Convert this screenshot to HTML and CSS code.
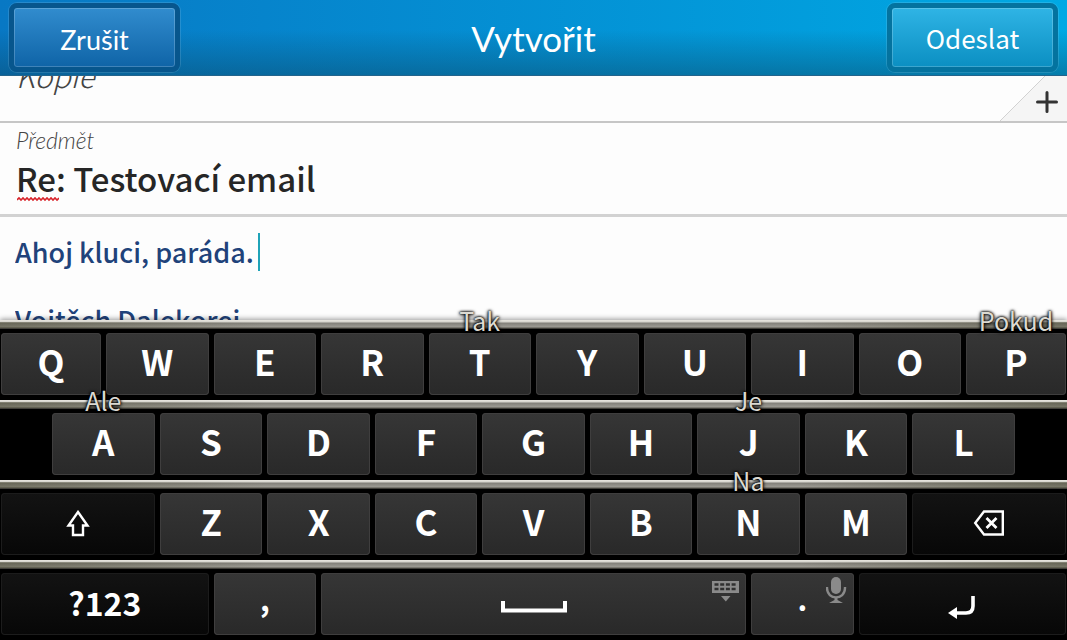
FILE: index.html
```html
<!DOCTYPE html>
<html lang="cs">
<head>
    <meta charset="utf-8">
    <title>Vytvořit</title>
    <link rel="stylesheet" href="styles.css">
</head>
<body>
    <header class="title-bar">
        <button type="button" class="action cancel">Zrušit</button>
        <h1>Vytvořit</h1>
        <button type="button" class="action send">Odeslat</button>
    </header>

    <form class="compose" action="#">
        <div class="cc-row">
            <input type="text" class="cc" name="cc" placeholder="Kopie" aria-label="Kopie">
            <button type="button" class="add" aria-label="Přidat">
                <svg width="67" height="46" viewBox="0 0 67 46">
                    <path d="M0 46L46 0H67V46Z" fill="#f5f5f5"/>
                    <path d="M0 46L46 0" stroke="#d2d2d2" fill="none"/>
                    <path d="M37.500 27H56.500M47 17.500V36.500" stroke="#333" stroke-width="3" stroke-linecap="round"/>
                </svg>
            </button>
        </div>
        <div class="subject-row">
            <label for="subject">Předmět</label>
            <input type="text" id="subject" name="subject" value="Re: Testovací email">
            <svg class="squiggle" width="42" height="6" viewBox="0 0 42 6">
                <path d="M0 4L2 2L4 4L6 2L8 4L10 2L12 4L14 2L16 4L18 2L20 4L22 2L24 4L26 2L28 4L30 2L32 4L34 2L36 4L38 2L40 4L42 2" stroke="#d8232a" stroke-width="1.6" fill="none"/>
            </svg>
        </div>
        <div class="message-row">
            <textarea name="message" rows="3" aria-label="Zpráva">Ahoj kluci, paráda.

Vojtěch Dalekorej</textarea>
            <span class="caret"></span>
        </div>
    </form>

    <div class="keyboard">
        <div class="row">
            <button type="button" class="key edge">Q</button>
            <button type="button" class="key">W</button>
            <button type="button" class="key">E</button>
            <button type="button" class="key">R</button>
            <button type="button" class="key">T<span class="hint">Tak</span></button>
            <button type="button" class="key">Y</button>
            <button type="button" class="key">U</button>
            <button type="button" class="key">I</button>
            <button type="button" class="key">O</button>
            <button type="button" class="key edge">P<span class="hint">Pokud</span></button>
        </div>
        <div class="row middle">
            <button type="button" class="key">A<span class="hint">Ale</span></button>
            <button type="button" class="key">S</button>
            <button type="button" class="key">D</button>
            <button type="button" class="key">F</button>
            <button type="button" class="key">G</button>
            <button type="button" class="key">H</button>
            <button type="button" class="key">J<span class="hint">Je</span></button>
            <button type="button" class="key">K</button>
            <button type="button" class="key">L</button>
        </div>
        <div class="row">
            <button type="button" class="key dark wide" aria-label="Shift">
                <svg width="24" height="28" viewBox="0 0 24 28">
                    <path d="M12 2L21.500 15.500H17V25H7V15.500H2.500Z" fill="none" stroke="#fff" stroke-width="2.400"/>
                </svg>
            </button>
            <button type="button" class="key">Z</button>
            <button type="button" class="key">X</button>
            <button type="button" class="key">C</button>
            <button type="button" class="key">V</button>
            <button type="button" class="key">B</button>
            <button type="button" class="key">N<span class="hint">Na</span></button>
            <button type="button" class="key">M</button>
            <button type="button" class="key dark wide" aria-label="Smazat">
                <svg width="32" height="28" viewBox="0 0 32 28">
                    <path d="M11 1.500H29.800V24.500H11L2.200 13Z" fill="none" stroke="#fff" stroke-width="2.400"/>
                    <path d="M13.500 8L23.500 18M23.500 8L13.500 18" stroke="#fff" stroke-width="2.800"/>
                </svg>
            </button>
        </div>
        <div class="row">
            <button type="button" class="key dark widest symbols">?123</button>
            <button type="button" class="key punct">,</button>
            <button type="button" class="key space low" aria-label="Mezera">
                <svg class="space-mark" width="66" height="12" viewBox="0 0 66 12">
                    <path d="M2 0V9.500H64V0" fill="none" stroke="#fff" stroke-width="4"/>
                </svg>
                <svg class="corner" width="28" height="28" viewBox="0 0 28 28">
                    <path d="M0 5H27V17H0Z" fill="#8a8a8a"/>
                    <path d="M2.500 8.500H25M2.500 13H25" stroke="#303030" stroke-width="2.400" stroke-dasharray="4 1.700"/>
                    <path d="M9 20H18.500L13.800 25.500Z" fill="#8a8a8a"/>
                </svg>
            </button>
            <button type="button" class="key punct">.
                <svg class="corner" width="22" height="28" viewBox="0 0 22 28">
                    <rect x="5" y="1" width="10" height="17" rx="5" fill="#8a8a8a"/>
                    <path d="M1 11V12C1 24.500 19 24.500 19 12V11" fill="none" stroke="#8a8a8a" stroke-width="2.400"/>
                    <path d="M8.500 21H11.500V24L17 27H3L8.500 24Z" fill="#8a8a8a"/>
                </svg>
            </button>
            <button type="button" class="key dark widest low" aria-label="Enter">
                <svg width="28" height="24" viewBox="0 0 28 24">
                    <path d="M25 1V11Q25 18 18 18H8" fill="none" stroke="#fff" stroke-width="3.600"/>
                    <path d="M0 18L9 12V24Z" fill="#fff"/>
                </svg>
            </button>
        </div>
    </div>
</body>
</html>
```
FILE: styles.css
```css
* {
    box-sizing: border-box;
}
body {
    margin: 0;
    height: 100vh;
    display: flex;
    flex-direction: column;
    overflow: hidden;
    background-color: #fdfdfd;
    font-family: "Noto Sans CJK SC", "Noto Sans", sans-serif;
}
button, input, textarea {
    font-family: inherit;
    margin: 0;
    padding: 0;
    border: none;
}
svg {
    display: block;
}

/* title bar */
.title-bar {
    height: 76px;
    flex: none;
    display: flex;
    align-items: center;
    justify-content: space-between;
    padding: 0 9px;
    background: linear-gradient(rgba(10, 70, 100, 0) 40%, rgba(10, 70, 100, 0.45)), linear-gradient(to right, #0878c4, #00a9e4);
    border-bottom: 1px solid #23648c;
}
h1 {
    margin: 0;
    font-family: Lato, sans-serif;
    font-size: 35px;
    font-weight: 400;
    color: #fff;
}
.action {
    width: 171px;
    height: 69px;
    border: 5px solid #07568d;
    border-radius: 8px;
    color: #fff;
    font-size: 26px;
    background: linear-gradient(#318cce, #0f64a7);
    box-shadow: inset 0 0 0 1px rgba(255, 255, 255, 0.2), 0 0 0 1px rgba(255, 255, 255, 0.12);
}
.cancel {
    padding-top: 3px;
    font-family: Lato, sans-serif;
    font-size: 27px;
}
.send {
    border-color: #04739f;
    background: linear-gradient(#2fb4e5, #0b8fc2);
}

/* fields */
.compose {
    flex: 1;
    min-height: 0;
    overflow: hidden;
}
.cc-row {
    display: flex;
    align-items: flex-end;
    height: 47px;
    overflow: hidden;
    border-bottom: 2px solid #c6c6c6;
}
.cc {
    flex: 1;
    height: 76px;
    padding: 0 16px 16px;
    background: transparent;
    font-size: 30px;
    font-style: italic;
    font-weight: 300;
}
.cc::placeholder {
    color: #444;
}
.add {
    background: none;
}
.subject-row {
    position: relative;
    height: 94px;
    padding: 2px 16px 0;
    border-bottom: 3px solid #d2d2d2;
}
.subject-row label {
    display: block;
    font-family: Lato, sans-serif;
    font-size: 23px;
    line-height: 30px;
    font-style: italic;
    font-weight: 300;
    color: #444;
}
.subject-row input {
    display: block;
    width: 100%;
    height: 46px;
    background: transparent;
    font-size: 33px;
    font-weight: 500;
    color: #262626;
}
.squiggle {
    position: absolute;
    left: 17px;
    top: 73px;
}
.message-row {
    position: relative;
    padding: 18px 15px 0;
}
textarea {
    display: block;
    width: 100%;
    resize: none;
    overflow: hidden;
    background: transparent;
    font-size: 27px;
    line-height: 34px;
    font-weight: 500;
    color: #20427a;
}
.caret {
    position: absolute;
    left: 258px;
    top: 16px;
    width: 2px;
    height: 38px;
    background-color: #1fa3b8;
}

/* keyboard */
.keyboard {
    flex: none;
    position: relative;
    background-color: #000;
    box-shadow: 0 -1px 5px rgba(0, 0, 0, 0.4);
}
.row {
    display: flex;
    gap: 5px;
    height: 80px;
    padding: 13px 1px 5px;
    background: linear-gradient(to right, rgba(50, 50, 20, 0.35), transparent 25%, transparent 75%, rgba(50, 50, 20, 0.35)) 0 2px / 100% 6px no-repeat,
        linear-gradient(#e9e7e0 0, #d5d3cc 2px, #83817a 3px, #9d9b93 7px, #55534c 8px, #2a2926 9px) 0 0 / 100% 9px no-repeat;
}
.middle::before, .middle::after {
    content: "";
    flex: 92 1 0;
}
.key {
    position: relative;
    flex: 205 1 0;
    display: flex;
    align-items: center;
    justify-content: center;
    padding-bottom: 8px;
    border-radius: 4px;
    background: linear-gradient(#363636, #292929);
    box-shadow: inset 0 0 0 1px #3f3e3e;
    color: #fff;
    font-size: 35px;
    font-weight: 700;
}
.edge {
    flex-grow: 200;
}
.wide {
    flex-grow: 308;
}
.widest {
    flex-grow: 415;
}
.space {
    flex-grow: 850;
}
.dark {
    padding-bottom: 0;
    background: linear-gradient(#131313, #070707);
    box-shadow: inset 0 0 0 1px #1c1c1c;
}
.symbols {
    padding-bottom: 4px;
    font-size: 32px;
}
.punct {
    padding-bottom: 12px;
    font-size: 30px;
}
.low {
    padding: 6px 0 0;
}
.hint {
    position: absolute;
    left: 0;
    right: 0;
    top: -31px;
    text-align: center;
    font-size: 25px;
    line-height: 36px;
    font-weight: 400;
    color: #dcdad2;
    text-shadow: 0 0 2px #000, 0 0 3px #000, 0 1px 4px #000;
}
.corner {
    position: absolute;
    right: 6px;
    top: 3px;
}
```
